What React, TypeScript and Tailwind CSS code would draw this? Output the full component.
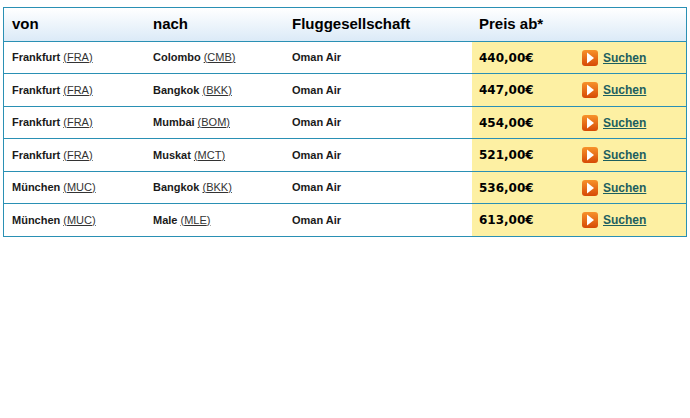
import React from "react"

type Flight = {
  from: string
  fromCode: string
  to: string
  toCode: string
  airline: string
  price: string
}

const flights: Flight[] = [
  { from: "Frankfurt", fromCode: "FRA", to: "Colombo", toCode: "CMB", airline: "Oman Air", price: "440,00€" },
  { from: "Frankfurt", fromCode: "FRA", to: "Bangkok", toCode: "BKK", airline: "Oman Air", price: "447,00€" },
  { from: "Frankfurt", fromCode: "FRA", to: "Mumbai", toCode: "BOM", airline: "Oman Air", price: "454,00€" },
  { from: "Frankfurt", fromCode: "FRA", to: "Muskat", toCode: "MCT", airline: "Oman Air", price: "521,00€" },
  { from: "München", fromCode: "MUC", to: "Bangkok", toCode: "BKK", airline: "Oman Air", price: "536,00€" },
  { from: "München", fromCode: "MUC", to: "Male", toCode: "MLE", airline: "Oman Air", price: "613,00€" },
]

// rows alternate 32/33px so lines land where the screenshot has them
const rowHeights = ["h-[32px]", "h-[33px]", "h-[32px]", "h-[33px]", "h-[32px]", "h-[32px]"]

const cols = "grid grid-cols-[141px_139px_188px_102px_1fr]"

function GoIcon() {
  return (
    <svg width="16" height="16" viewBox="0 0 16 16" className="shrink-0">
      <defs>
        <linearGradient id="go" x1="0" y1="0" x2="0" y2="1">
          <stop offset="0" stopColor="#f7922a" />
          <stop offset="1" stopColor="#d64a05" />
        </linearGradient>
      </defs>
      <rect x="0" y="0" width="16" height="16" rx="3" fill="url(#go)" />
      <path d="M5 2.5 L12 8 L5 13.5 Z" fill="#ffffff" />
    </svg>
  )
}

export default function App() {
  return (
    <div className="w-[690px] h-[418px] bg-white pt-[7px] pl-[3px] font-['Liberation_Sans',Arial,sans-serif] text-[#1a1a1a]">
      <div className="w-[684px] border border-[#2a90b4]">
        {/* header */}
        <div className={`${cols} h-[34px] border-b border-[#2a90b4] bg-gradient-to-b from-white to-[#dbeaf7] text-[15px] font-bold text-black`}>
          <div className="flex items-center pl-[8px]">von</div>
          <div className="flex items-center pl-[8px]">nach</div>
          <div className="flex items-center pl-[8px]">Fluggesellschaft</div>
          <div className="flex items-center pl-[7px]">Preis ab*</div>
          <div />
        </div>

        {flights.map((f, i) => (
          <div
            key={i}
            className={`${cols} ${rowHeights[i]} ${i < flights.length - 1 ? "border-b border-[#2a90b4]" : ""} text-[11px]`}
          >
            <div className="flex items-center pl-[8px]">
              <span className="font-bold">{f.from}</span>
              <span className="ml-[3px] underline text-[#333]">({f.fromCode})</span>
            </div>
            <div className="flex items-center pl-[8px]">
              <span className="font-bold">{f.to}</span>
              <span className="ml-[3px] underline text-[#333]">({f.toCode})</span>
            </div>
            <div className="flex items-center pl-[8px] font-bold">{f.airline}</div>
            <div className="flex items-center pl-[7px] bg-[#fdf0a3] font-['DejaVu_Sans',Verdana,sans-serif] text-[12px] font-bold text-black">{f.price}</div>
            <div className="flex items-center gap-[5px] pl-[8px] bg-[#fdf0a3]">
              <GoIcon />
              <a href="#" className="text-[12px] font-bold underline text-[#1c5f5f]">Suchen</a>
            </div>
          </div>
        ))}
      </div>
    </div>
  )
}
